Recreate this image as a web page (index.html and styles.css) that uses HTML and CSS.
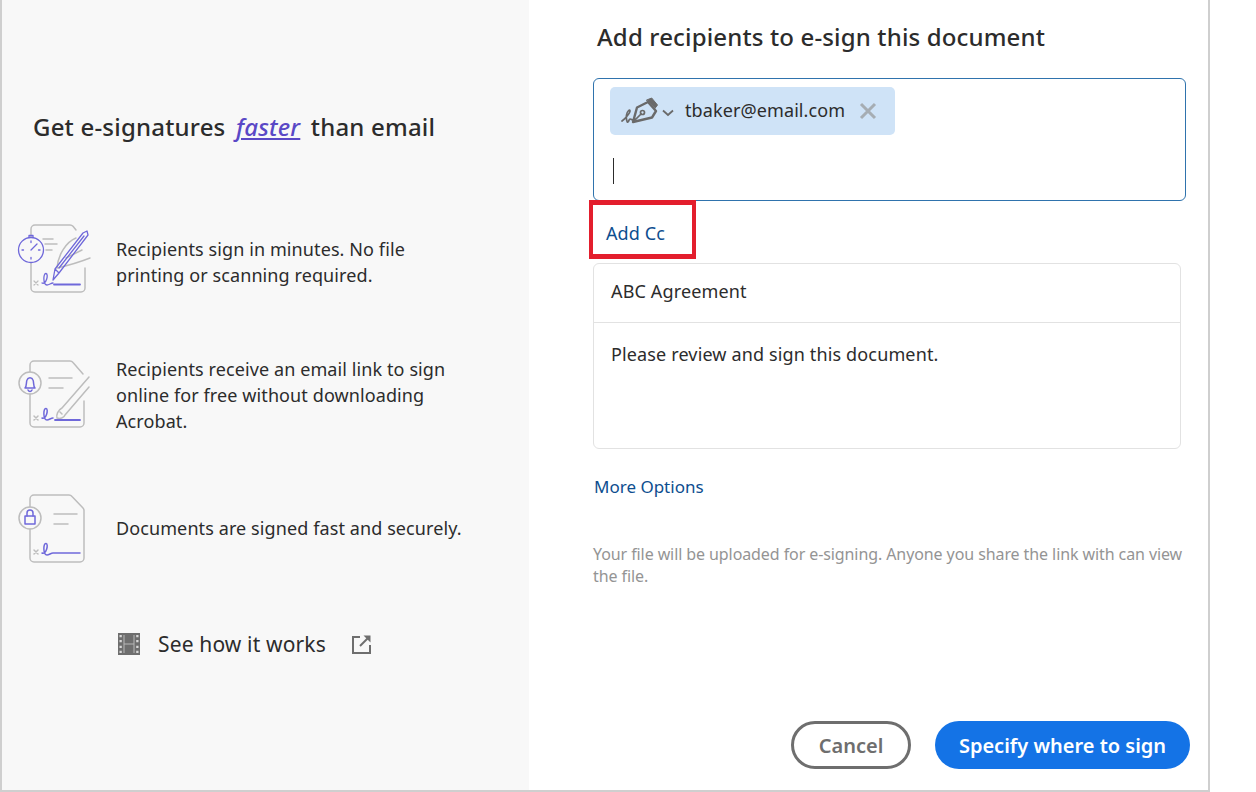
FILE: index.html
```html
<!DOCTYPE html>
<html lang="en">
<head>
<meta charset="utf-8">
<title>Add recipients</title>
<link rel="stylesheet" href="styles.css">
</head>
<body>
<div class="window">
  <aside class="promo">
    <h2 class="promo-title">Get e-signatures <a class="faster">faster</a> than email</h2>
    <div class="features">
      <div class="feature">
        <svg class="feature-icon" viewBox="0 0 80 80" fill="none" stroke-linecap="round" stroke-linejoin="round">
          <g stroke="#bdbdbd" stroke-width="1.500">
            <path d="M15 15V7a4 4 0 0 1 4-4H54a4 4 0 0 1 3 1.300L60 8"/>
            <path d="M15 41V66a4 4 0 0 0 4 4H65a4 4 0 0 0 4-4V46"/>
            <path d="M27 17H37M29 22H41M30 28H36"/>
            <path d="M41 46C42 33 50 20 60 16M41 46C54 43 64 40 74 36M50 36 66 28"/>
          </g>
          <g stroke="#6f68da" stroke-width="1.300">
            <circle cx="15" cy="28" r="12.500"/>
            <path d="M13 15.500V13.500H17V15.500M15 28 21 22M15 19V20.500M15 35.500V37M6 28H7.500M22.500 28H24"/>
            <path d="M37 58 39 47 67 11 71 9 72 13 43 51ZM39 47 43 51M43 46 68 14"/>
            <path d="M26 61C30 63 33 52 30 51.500 27 51 27 63 31 63 33 63 35 61 37 61"/>
          </g>
          <path d="M38 62.500H64" stroke="#6f68da" stroke-width="1.800"/>
          <path d="M18 59 22 63M22 59 18 63" stroke="#bdbdbd" stroke-width="1.200"/>
        </svg>
        <p class="feature-text">Recipients sign in minutes. No file<br>printing or scanning required.</p>
      </div>
      <div class="feature">
        <svg class="feature-icon" viewBox="0 0 80 80" fill="none" stroke-linecap="round" stroke-linejoin="round">
          <g stroke="#bdbdbd" stroke-width="1.500">
            <path d="M14 17V10a4 4 0 0 1 4-4H54a4 4 0 0 1 3 1.500L67 19"/>
            <path d="M14 39V68a4 4 0 0 0 4 4H64a4 4 0 0 0 4-4V46"/>
            <circle cx="14" cy="28" r="11"/>
            <path d="M33 23H56M33 33H47"/>
            <path d="M73 22 46 53M73 32 49 60M46 53C42 55 40 60 41 63 44 64 48 63 49 60M44 57 46 59"/>
            <path d="M18 61 22 65M22 61 18 65"/>
          </g>
          <g stroke="#6f68da" stroke-width="1.500">
            <path d="M9 33C11 31 10 27 11 25 12 22 16 22 17 25 18 27 17 31 19 33ZM12 35C13 37 15 37 16 35"/>
            <path d="M26 63C30 65 33 54 30 53.500 27 53 27 65 31 65 33 65 35 63 37 63"/>
          </g>
          <path d="M39 65H64" stroke="#6f68da" stroke-width="1.800"/>
        </svg>
        <p class="feature-text">Recipients receive an email link to sign<br>online for free without downloading<br>Acrobat.</p>
      </div>
      <div class="feature">
        <svg class="feature-icon" viewBox="0 0 80 80" fill="none" stroke-linecap="round" stroke-linejoin="round">
          <g stroke="#bdbdbd" stroke-width="1.500">
            <path d="M14 19V11a4 4 0 0 1 4-4H53a4 4 0 0 1 3 1.500L67 20a4 4 0 0 1 1 3V70a4 4 0 0 1-4 4H18a4 4 0 0 1-4-4V41"/>
            <circle cx="14" cy="30" r="11"/>
            <path d="M38 26H61M38 36H52"/>
            <path d="M18 62 22 66M22 62 18 66"/>
          </g>
          <g stroke="#6f68da" stroke-width="1.500">
            <rect x="9" y="28" width="10" height="8"/>
            <path d="M11 28V25a3 3 0 0 1 6 0V28"/>
            <path d="M26 65C30 67 33 56 30 55.500 27 55 27 67 31 67 33 67 35 65 37 65H64"/>
          </g>
        </svg>
        <p class="feature-text">Documents are signed fast and securely.</p>
      </div>
    </div>
    <div class="how">
      <svg class="film-icon" viewBox="0 0 22 22">
        <rect width="22" height="22" fill="#6e6e6e"/>
        <path fill="#d8d8d8" d="M1.500 2H3.800V4.300H1.500ZM1.500 7H3.800V9.300H1.500ZM1.500 12.700H3.800V15H1.500ZM1.500 17.700H3.800V20H1.500ZM18.200 2H20.500V4.300H18.200ZM18.200 7H20.500V9.300H18.200ZM18.200 12.700H20.500V15H18.200ZM18.200 17.700H20.500V20H18.200Z"/>
        <path fill="#b8b8b8" d="M5.500 2H6.500V20H5.500ZM15.500 2H16.500V20H15.500ZM6.500 10.500H15.500V11.500H6.500Z"/>
      </svg>
      <span class="how-text">See how it works</span>
      <svg class="ext-icon" viewBox="0 0 20 20" fill="none" stroke="#6e6e6e" stroke-width="2">
        <path d="M8 3H1V19H18V11"/>
        <path d="M8 12 17 3"/>
        <path d="M11.500 1.500H18.500V8.500Z" stroke="none" fill="#6e6e6e"/>
      </svg>
    </div>
  </aside>
  <main class="panel">
    <h1 class="panel-title">Add recipients to e-sign this document</h1>
    <div class="recipients">
      <div class="chip">
        <svg class="pen-icon" viewBox="0 0 38 28" fill="none" stroke="#6a6a6a" stroke-linejoin="round" stroke-linecap="round">
          <path d="M1 24C4 22 9 16 9 14 9 12 6 14 5.500 18 5 22 6 26 7 25 8 24 8 22 9 22 10 22 11 24 14 22" stroke-width="1.700"/>
          <path d="M12 25 16 10.500 27 5 35 14 31 20.500Z" stroke-width="2.400"/>
          <path d="M25.700 3 30.700 1 36.500 8 34 11.300Z" fill="#6a6a6a" stroke-width="1"/>
          <path d="M13 24 20 17" stroke-width="1.700"/>
          <circle cx="21.500" cy="15.500" r="2" stroke-width="1.700"/>
        </svg>
        <svg class="chev-icon" viewBox="0 0 12 8" fill="none" stroke="#6a6a6a" stroke-width="1.800"><path d="M1 1.500 6 6 11 1.500"/></svg>
        <span class="chip-email">tbaker@email.com</span>
        <svg class="x-icon" viewBox="0 0 18 18" fill="none" stroke="#a6adb3" stroke-width="3"><path d="M2 2 16 16M16 2 2 16"/></svg>
      </div>
      <div class="caret"></div>
    </div>
    <div class="cc-row">
      <a class="link cc-link">Add Cc</a>
      <div class="highlight"></div>
    </div>
    <div class="card">
      <div class="card-head">ABC Agreement</div>
      <div class="card-body">Please review and sign this document.</div>
    </div>
    <a class="link more">More Options</a>
    <p class="notice">Your file will be uploaded for e-signing. Anyone you share the link with can view the file.</p>
    <div class="actions">
      <button class="btn btn-cancel">Cancel</button>
      <button class="btn btn-primary">Specify where to sign</button>
    </div>
  </main>
</div>
</body>
</html>
```
FILE: styles.css
```css
* { box-sizing: border-box; }
html, body { margin: 0; padding: 0; }
body {
  width: 1256px;
  height: 792px;
  background: #fff;
  color: #2c2c2c;
  font-family: "Noto Sans", "Open Sans", sans-serif;
  overflow: hidden;
}
.window {
  display: flex;
  width: 1210px;
  height: 792px;
  border-left: 2px solid #cfcfcf;
  border-right: 2px solid #cfcfcf;
  border-bottom: 2px solid #cfcfcf;
}
.promo {
  width: 527px;
  flex: none;
  background: #f8f8f8;
  padding: 112px 0 0 0;
}
.promo-title {
  margin: 0 0 0 31px;
  font-size: 24px;
  line-height: 30px;
  font-weight: 500;
  letter-spacing: 0.2px;
}
.faster {
  color: #5a48c6;
  font-style: italic;
  text-decoration: underline;
  margin: 0 4px;
}
.features {
  margin-top: 80px;
  display: flex;
  flex-direction: column;
  gap: 53px;
}
.feature {
  display: flex;
  align-items: center;
  height: 80px;
  padding-left: 14px;
}
.feature-icon {
  width: 80px;
  height: 80px;
  flex: none;
}
.feature-text {
  margin: 0 0 0 20px;
  font-size: 18px;
  line-height: 26px;
  letter-spacing: 0.1px;
}
.how {
  display: flex;
  align-items: center;
  height: 40px;
  margin-top: 56px;
  padding-left: 116px;
}
.film-icon { width: 22px; height: 22px; flex: none; }
.how-text {
  margin-left: 18px;
  font-size: 21px;
  letter-spacing: 0.15px;
}
.ext-icon { width: 20px; height: 20px; margin-left: 26px; flex: none; }
.panel {
  flex: 1;
  display: flex;
  flex-direction: column;
  padding: 0 18px 21px 64px;
  min-width: 0;
}
.panel-title {
  margin: 0;
  height: 78px;
  padding: 21px 0 0 4px;
  font-size: 24px;
  line-height: 32px;
  font-weight: 500;
  letter-spacing: 0.15px;
}
.recipients {
  width: 593px;
  height: 123px;
  border: 1px solid #2f73ad;
  border-radius: 6px;
  padding: 8px 0 0 16px;
}
.chip {
  display: flex;
  align-items: center;
  width: 285px;
  height: 48px;
  background: #cfe3f7;
  border-radius: 5px;
  padding-left: 11px;
}
.pen-icon { width: 38px; height: 28px; flex: none; }
.chev-icon { width: 12px; height: 8px; margin: 3px 0 0 3px; flex: none; }
.chip-email {
  margin: -2px 0 0 11px;
  font-size: 18px;
  letter-spacing: 0.1px;
}
.x-icon { width: 18px; height: 18px; margin-left: 14px; flex: none; }
.caret {
  width: 1px;
  height: 26px;
  margin: 23px 0 0 3px;
  background: #2c2c2c;
}
.cc-row {
  position: relative;
  height: 62px;
  display: flex;
  align-items: center;
  padding: 0 0 0 13px;
}
.link { color: #0d4e8f; font-size: 18px; letter-spacing: 0.1px; }
.cc-link { margin-top: 2px; }
.highlight {
  position: absolute;
  left: -4px;
  top: -1px;
  width: 107px;
  height: 59px;
  border-style: solid;
  border-color: #e31e2d;
  border-width: 5px 4px;
}
.card {
  width: 588px;
  height: 186px;
  border: 1px solid #e2e2e2;
  border-radius: 6px;
  font-size: 18px;
  letter-spacing: 0.14px;
}
.card-head {
  height: 59px;
  padding: 0 0 4px 17px;
  display: flex;
  align-items: center;
  border-bottom: 1px solid #e2e2e2;
}
.card-body { padding: 18px 0 0 17px; line-height: 26px; }
.more { margin: 24px 0 0 1px; font-size: 17px; letter-spacing: 0; line-height: 28px; }
.notice {
  margin: 42px 0 0 0;
  font-size: 16px;
  line-height: 22px;
  color: #949494;
  letter-spacing: -0.09px;
}
.actions {
  margin-top: auto;
  display: flex;
  justify-content: flex-end;
  gap: 24px;
}
.btn {
  height: 48px;
  border-radius: 24px;
  font-family: inherit;
  font-size: 20px;
  font-weight: 600;
  padding: 1px 0 0;
}
.btn-cancel {
  width: 120px;
  background: #fff;
  border: 3px solid #6e6e6e;
  color: #6e6e6e;
}
.btn-primary {
  width: 255px;
  background: #1473e6;
  border: none;
  color: #fff;
}
```
